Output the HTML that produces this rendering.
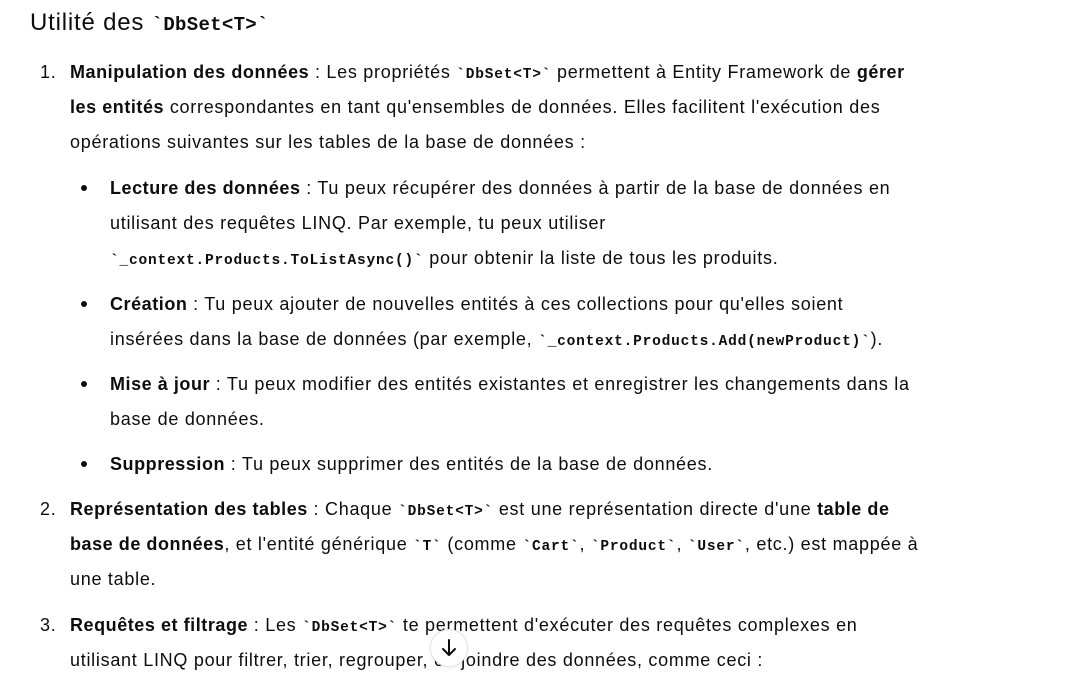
<!DOCTYPE html>
<html><head><meta charset="utf-8"><style>
body{margin:0;background:#fff;width:1073px;height:684px;overflow:hidden;position:relative;font-family:"Liberation Sans",sans-serif;color:#0d0d0d;font-size:18px;letter-spacing:0.72px}
.l{position:absolute;white-space:nowrap;height:35px;line-height:35px}
b{font-weight:bold;letter-spacing:0.55px}
code{font-family:"Liberation Mono",monospace;font-weight:bold;font-size:14.5px;letter-spacing:0.8px}
.h{position:absolute;left:30px;top:8px;font-size:24px;line-height:30px;font-weight:normal;letter-spacing:0.8px}
.h code{font-size:19px;letter-spacing:0.3px}
.dot{position:absolute;width:6px;height:6px;border-radius:50%;background:#0d0d0d}
.btn{position:absolute;left:430px;top:629px;width:36px;height:36px;border-radius:50%;border:1px solid #e3e3e3;background:#fff;box-shadow:0 1px 3px rgba(0,0,0,.08)}
</style></head><body>
<div class="h">Utilité des <code>`DbSet&lt;T&gt;`</code></div>

<div class="l" style="left:40px;top:55px">1.</div>
<div class="l" style="left:70px;top:55px"><b>Manipulation des données</b> : Les propriétés <code>`DbSet&lt;T&gt;`</code> permettent à Entity Framework de <b>gérer</b></div>
<div class="l" style="left:70px;top:90px"><b>les entités</b> correspondantes en tant qu'ensembles de données. Elles facilitent l'exécution des</div>
<div class="l" style="left:70px;top:125px">opérations suivantes sur les tables de la base de données :</div>

<div class="dot" style="left:81px;top:185px"></div>
<div class="l" style="left:110px;top:171px"><b>Lecture des données</b> : Tu peux récupérer des données à partir de la base de données en</div>
<div class="l" style="left:110px;top:206px">utilisant des requêtes LINQ. Par exemple, tu peux utiliser</div>
<div class="l" style="left:110px;top:241px"><code>`_context.Products.ToListAsync()`</code> pour obtenir la liste de tous les produits.</div>

<div class="dot" style="left:81px;top:301px"></div>
<div class="l" style="left:110px;top:287px"><b>Création</b> : Tu peux ajouter de nouvelles entités à ces collections pour qu'elles soient</div>
<div class="l" style="left:110px;top:322px">insérées dans la base de données (par exemple, <code>`_context.Products.Add(newProduct)`</code>).</div>

<div class="dot" style="left:81px;top:381px"></div>
<div class="l" style="left:110px;top:367px"><b>Mise à jour</b> : Tu peux modifier des entités existantes et enregistrer les changements dans la</div>
<div class="l" style="left:110px;top:402px">base de données.</div>

<div class="dot" style="left:81px;top:461px"></div>
<div class="l" style="left:110px;top:447px"><b>Suppression</b> : Tu peux supprimer des entités de la base de données.</div>

<div class="l" style="left:40px;top:492px">2.</div>
<div class="l" style="left:70px;top:492px"><b>Représentation des tables</b> : Chaque <code>`DbSet&lt;T&gt;`</code> est une représentation directe d'une <b>table de</b></div>
<div class="l" style="left:70px;top:527px"><b>base de données</b>, et l'entité générique <code>`T`</code> (comme <code>`Cart`</code>, <code>`Product`</code>, <code>`User`</code>, etc.) est mappée à</div>
<div class="l" style="left:70px;top:562px">une table.</div>

<div class="l" style="left:40px;top:608px">3.</div>
<div class="l" style="left:70px;top:608px"><b>Requêtes et filtrage</b> : Les <code>`DbSet&lt;T&gt;`</code> te permettent d'exécuter des requêtes complexes en</div>
<div class="l" style="left:70px;top:643px">utilisant LINQ pour filtrer, trier, regrouper, ou joindre des données, comme ceci :</div>

<div class="btn"><svg width="36" height="36" viewBox="0 0 36 36"><path d="M18 10v15M12 19l6 6 6-6" fill="none" stroke="#0d0d0d" stroke-width="2" stroke-linecap="round" stroke-linejoin="round"/></svg></div>
</body></html>
